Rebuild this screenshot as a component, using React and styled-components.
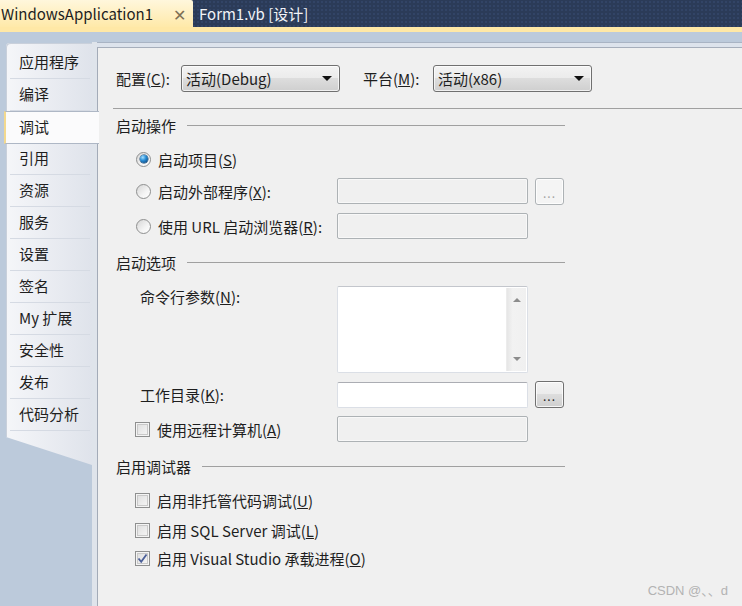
import React from "react";
import styled, { createGlobalStyle } from "styled-components";

const GlobalStyle = createGlobalStyle`
  html, body { margin: 0; padding: 0; }
  body {
    width: 742px;
    height: 606px;
    overflow: hidden;
    background: #bccadb;
    font-family: "Noto Sans CJK SC", sans-serif;
    font-size: 15px;
    color: #1e1e1e;
  }
`;

const Page = styled.div`
  width: 742px;
  height: 606px;
  display: flex;
  flex-direction: column;
  position: relative;
  overflow: hidden;
`;

const DocTabs = styled.div`
  height: 27px;
  flex-shrink: 0;
  display: flex;
  background-color: #2b3b58;
  background-image: radial-gradient(#324466 1px, transparent 1.2px);
  background-size: 4px 4px;
`;

const DocTab = styled.div`
  display: flex;
  align-items: center;
  width: ${(p) => (p.$active ? "193px" : "auto")};
  padding-left: ${(p) => (p.$active ? "1px" : "6px")};
  box-sizing: border-box;
  white-space: nowrap;
  color: ${(p) => (p.$active ? "#1e1e1e" : "#f1f3f7")};
  background: ${(p) => (p.$active ? "linear-gradient(#fff7dc, #ffe9a9)" : "transparent")};
  border-top-right-radius: 2px;
  .close {
    margin-left: auto;
    margin-right: 7px;
    color: #7d6e55;
    font-size: 16px;
  }
`;

const YellowRule = styled.div`
  height: 5px;
  flex-shrink: 0;
  background: #ffe8a6;
`;

const Body = styled.div`
  flex: 1;
  display: flex;
  padding-top: 10px;
  background: #bccadb;
`;

const Sidebar = styled.div`
  width: 97px;
  flex-shrink: 0;
  padding-top: 1px;
  padding-left: 6px;
  box-sizing: border-box;
  background: linear-gradient(to right, #bccadb 92px, #dfe4eb 92px);
`;

const TabList = styled.div`
  width: 86px;
  padding-top: 4px;
  border-top-left-radius: 4px;
  box-sizing: border-box;
  background: linear-gradient(to right, #f5f6f9, #dfe3eb);
  box-shadow: inset 1px 1px 0 #c9d0db;
`;

const PageTab = styled.div`
  position: relative;
  height: 32px;
  display: flex;
  align-items: center;
  box-sizing: border-box;
  padding-left: 13px;
  padding-bottom: 3px;
  white-space: nowrap;
  &::after {
    content: "";
    position: absolute;
    left: 4px;
    right: 2px;
    bottom: 0;
    height: 1px;
    background: #d5dae3;
  }
  &.selected {
    z-index: 1;
    margin-left: -2px;
    margin-right: -7px;
    padding-left: 13px;
    height: 33px;
    margin-bottom: -1px;
    background: #fbfbfc;
    border-left: 2px solid #f3d98f;
    border-top: 1px solid #aeb7c5;
    border-bottom: 1px solid #aeb7c5;
  }
  &.selected::after { display: none; }
`;

const TabTail = styled.div`
  width: 86px;
  height: 34px;
  background: linear-gradient(to right, #f5f6f9, #dfe3eb);
  clip-path: polygon(0 0, 100% 0, 100% 100%, 0 6px);
  box-shadow: inset 1px 0 0 #c9d0db;
`;

const Content = styled.div`
  flex: 1;
  display: flex;
  flex-direction: column;
  border-top: 1px solid #a9b4c4;
  padding-top: 4px;
  background: #dde3ec;
`;

const Panel = styled.div`
  flex: 1;
  border-top: 1px solid #a6aebb;
  border-left: 1px solid #a3abb8;
  background: #f0f0f0;
  padding: 17px 0 0 18px;
`;

const ConfigRow = styled.div`
  display: flex;
  align-items: center;
  height: 27px;
`;

const FieldLabel = styled.span`
  width: ${(p) => p.$w}px;
  margin-left: ${(p) => p.$ml || 0}px;
  white-space: nowrap;
  flex-shrink: 0;
`;

const Combo = styled.div`
  width: 159px;
  height: 27px;
  box-sizing: border-box;
  display: flex;
  align-items: center;
  padding: 0 7px 0 4px;
  border: 1px solid #707070;
  border-radius: 3px;
  background: linear-gradient(#f3f3f3 0%, #ebebeb 50%, #dddddd 50%, #cfcfcf 100%);
  box-shadow: inset 0 0 0 1px rgba(255, 255, 255, 0.7);
  span { flex: 1; }
  &::after {
    content: "";
    border-left: 5px solid transparent;
    border-right: 5px solid transparent;
    border-top: 5px solid #111;
  }
`;

const Divider = styled.div`
  height: 1px;
  margin: 16px 0 0 -3px;
  background: #a0a0a0;
`;

const SectionHeader = styled.div`
  width: 449px;
  height: 22px;
  margin-top: ${(p) => p.$mt}px;
  display: flex;
  align-items: center;
  gap: 11px;
  &::after {
    content: "";
    flex: 1;
    height: 1px;
    background: #a0a0a0;
  }
`;

const OptionRow = styled.div`
  display: flex;
  align-items: ${(p) => p.$align || "center"};
  height: ${(p) => p.$h || 26}px;
  margin-top: ${(p) => p.$mt}px;
`;

const LeftCell = styled.div`
  width: 221px;
  height: ${(p) => (p.$top ? "20px" : "auto")};
  flex-shrink: 0;
  box-sizing: border-box;
  padding-left: ${(p) => p.$indent}px;
  display: flex;
  align-items: center;
  gap: 7px;
  white-space: nowrap;
`;

const Radio = styled.span`
  width: 15px;
  height: 15px;
  box-sizing: border-box;
  border-radius: 50%;
  border: 1px solid #8e8f8f;
  background: linear-gradient(135deg, #d6d6d6, #f4f4f4 60%, #ffffff);
  display: flex;
  align-items: center;
  justify-content: center;
  flex-shrink: 0;
  &::after {
    content: "";
    display: ${(p) => (p.$checked ? "block" : "none")};
    width: 8px;
    height: 8px;
    border-radius: 50%;
    background: radial-gradient(circle at 35% 30%, #a6e0ff 0%, #2a8ed6 40%, #0e4a82 85%);
    box-shadow: 0 0 0 0.5px #0b3a66;
  }
`;

const CheckBox = styled.span`
  width: 15px;
  height: 15px;
  box-sizing: border-box;
  border: 1px solid #8e8f8f;
  box-shadow: inset 0 0 0 1px #f4f4f4, inset 0 0 0 2px #c9c9c9;
  background-image: linear-gradient(135deg, #dcdcdc, #f8f8f8);
  display: flex;
  align-items: center;
  justify-content: center;
  flex-shrink: 0;
  svg { display: block; }
`;

const TextBox = styled.div`
  width: 191px;
  height: 26px;
  box-sizing: border-box;
  border: 1px solid ${(p) => (p.$disabled ? "#adb2b5" : "#dbdfe6")};
  border-top-color: ${(p) => (p.$disabled ? "#adb2b5" : "#abadb3")};
  border-radius: 2px;
  background: ${(p) => (p.$disabled ? "#f0f0f0" : "#ffffff")};
  box-shadow: ${(p) => (p.$disabled ? "inset 0 0 0 1px #f8f8f8" : "none")};
  flex-shrink: 0;
`;

const MultiLine = styled.div`
  width: 191px;
  height: 87px;
  box-sizing: border-box;
  border: 1px solid #dbdfe6;
  border-top-color: #c3c6cc;
  border-radius: 2px;
  background: #ffffff;
  display: flex;
  justify-content: flex-end;
  padding: 1px;
  flex-shrink: 0;
`;

const ScrollTrack = styled.div`
  width: 20px;
  display: flex;
  flex-direction: column;
  justify-content: space-between;
  align-items: center;
  padding: 10px 0 10px;
  box-sizing: border-box;
  background: linear-gradient(to right, #e6e6e6, #f2f2f2 30%, #f0f0f0);
  border-left: 1px solid #ececec;
`;

const Arrow = styled.span`
  width: 0;
  height: 0;
  border-left: 4px solid transparent;
  border-right: 4px solid transparent;
  ${(p) => (p.$down ? "border-top: 4px solid #8c8c8c;" : "border-bottom: 4px solid #8c8c8c;")}
`;

const BrowseButton = styled.div`
  width: 29px;
  height: 27px;
  margin-left: 7px;
  box-sizing: border-box;
  border-radius: 3px;
  display: flex;
  align-items: flex-end;
  justify-content: center;
  padding-bottom: 5px;
  font-size: 12px;
  line-height: 1;
  letter-spacing: 1px;
  border: 1px solid ${(p) => (p.$disabled ? "#adb2b5" : "#707070")};
  color: ${(p) => (p.$disabled ? "#a3a3a3" : "#1e1e1e")};
  background: ${(p) =>
    p.$disabled
      ? "#f4f4f4"
      : "linear-gradient(#f3f3f3 0%, #ebebeb 50%, #dddddd 50%, #cfcfcf 100%)"};
  box-shadow: inset 0 0 0 1px rgba(255, 255, 255, 0.8);
  flex-shrink: 0;
`;

const Watermark = styled.div`
  position: absolute;
  right: 14px;
  bottom: 7px;
  font-family: "Liberation Sans", "Noto Sans CJK SC", sans-serif;
  font-size: 13px;
  color: #b3b3b3;
`;

const tabs = ["应用程序", "编译", "调试", "引用", "资源", "服务", "设置", "签名", "My 扩展", "安全性", "发布", "代码分析"];

const Key = ({ children }) => <u>{children}</u>;

const Check = () => (
  <svg width="11" height="11" viewBox="0 0 11 11">
    <path d="M1.5 5.5 L4.2 8.8 L9.5 1.5" fill="none" stroke="#4b5f98" strokeWidth="1.8" />
  </svg>
);

export default function App() {
  return (
    <Page>
      <GlobalStyle />
      <DocTabs>
        <DocTab $active>
          WindowsApplication1<span className="close">✕</span>
        </DocTab>
        <DocTab>Form1.vb [设计]</DocTab>
      </DocTabs>
      <YellowRule />
      <Body>
        <Sidebar>
          <TabList>
            {tabs.map((t) => (
              <PageTab key={t} className={t === "调试" ? "selected" : ""}>
                {t}
              </PageTab>
            ))}
          </TabList>
          <TabTail />
        </Sidebar>
        <Content>
          <Panel>
            <ConfigRow>
              <FieldLabel $w={65}>
                配置(<Key>C</Key>):
              </FieldLabel>
              <Combo>
                <span>活动(Debug)</span>
              </Combo>
              <FieldLabel $w={70} $ml={23}>
                平台(<Key>M</Key>):
              </FieldLabel>
              <Combo>
                <span>活动(x86)</span>
              </Combo>
            </ConfigRow>
            <Divider />

            <SectionHeader $mt={5}>启动操作</SectionHeader>
            <OptionRow $mt={10}>
              <LeftCell $indent={20}>
                <Radio $checked />
                <span>启动项目(<Key>S</Key>)</span>
              </LeftCell>
            </OptionRow>
            <OptionRow $mt={6}>
              <LeftCell $indent={20}>
                <Radio />
                <span>启动外部程序(<Key>X</Key>):</span>
              </LeftCell>
              <TextBox $disabled />
              <BrowseButton $disabled>...</BrowseButton>
            </OptionRow>
            <OptionRow $mt={9}>
              <LeftCell $indent={20}>
                <Radio />
                <span>使用 URL 启动浏览器(<Key>R</Key>):</span>
              </LeftCell>
              <TextBox $disabled />
            </OptionRow>

            <SectionHeader $mt={12}>启动选项</SectionHeader>
            <OptionRow $mt={13} $h={87} $align="flex-start">
              <LeftCell $indent={24} $top>
                <span>命令行参数(<Key>N</Key>):</span>
              </LeftCell>
              <MultiLine>
                <ScrollTrack>
                  <Arrow />
                  <Arrow $down />
                </ScrollTrack>
              </MultiLine>
            </OptionRow>
            <OptionRow $mt={8} $h={27}>
              <LeftCell $indent={24}>
                <span>工作目录(<Key>K</Key>):</span>
              </LeftCell>
              <TextBox />
              <BrowseButton>...</BrowseButton>
            </OptionRow>
            <OptionRow $mt={8}>
              <LeftCell $indent={19}>
                <CheckBox />
                <span>使用远程计算机(<Key>A</Key>)</span>
              </LeftCell>
              <TextBox $disabled />
            </OptionRow>

            <SectionHeader $mt={13}>启用调试器</SectionHeader>
            <OptionRow $mt={12} $h={22}>
              <LeftCell $indent={19}>
                <CheckBox />
                <span>启用非托管代码调试(<Key>U</Key>)</span>
              </LeftCell>
            </OptionRow>
            <OptionRow $mt={8} $h={22}>
              <LeftCell $indent={19}>
                <CheckBox />
                <span>启用 SQL Server 调试(<Key>L</Key>)</span>
              </LeftCell>
            </OptionRow>
            <OptionRow $mt={6} $h={22}>
              <LeftCell $indent={19}>
                <CheckBox>
                  <Check />
                </CheckBox>
                <span>启用 Visual Studio 承载进程(<Key>O</Key>)</span>
              </LeftCell>
            </OptionRow>
          </Panel>
        </Content>
      </Body>
      <Watermark>CSDN @、、d</Watermark>
    </Page>
  );
}
